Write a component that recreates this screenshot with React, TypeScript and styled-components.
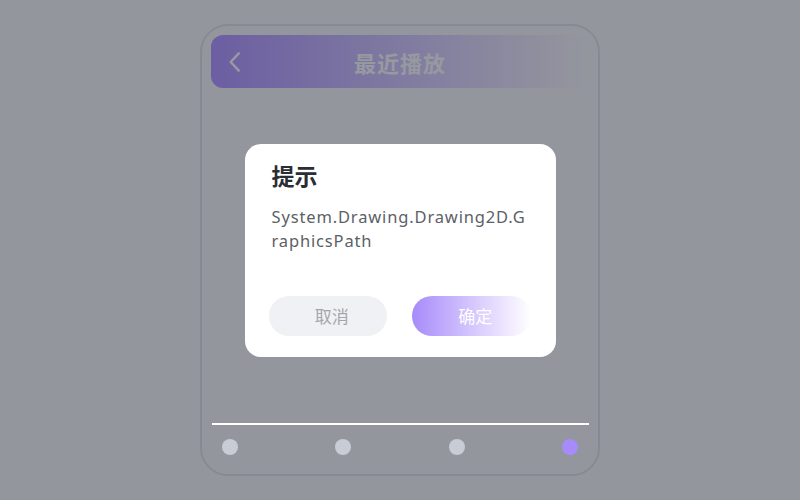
import React from "react";
import styled, { createGlobalStyle } from "styled-components";

const Global = createGlobalStyle`
  html, body { margin: 0; padding: 0; }
  body {
    width: 800px;
    height: 500px;
    overflow: hidden;
    background: #ebecef;
    font-family: "Noto Sans", "Noto Sans CJK SC", sans-serif;
  }
`;

const Page = styled.div`
  width: 800px;
  height: 500px;
  display: flex;
  align-items: center;
  justify-content: center;
`;

const Phone = styled.div`
  width: 396px;
  height: 448px;
  box-sizing: content-box;
  border: 2px solid #caccd1;
  border-radius: 28px;
  display: flex;
  flex-direction: column;
  overflow: hidden;
`;

const Header = styled.div`
  margin: 9px 9px 0 9px;
  height: 53px;
  border-radius: 12px;
  background: linear-gradient(90deg, #8760fb 0%, rgba(135, 96, 251, 0.45) 55%, rgba(235, 236, 239, 0) 100%);
  display: flex;
  align-items: center;
`;

const BackBtn = styled.div`
  width: 48px;
  height: 53px;
  display: flex;
  align-items: center;
  justify-content: center;
  color: #f4f4f8;
`;

const HeaderTitle = styled.div`
  flex: 1;
  text-align: center;
  margin-right: 48px;
  font-family: "Noto Sans CJK SC", sans-serif;
  font-weight: 700;
  font-size: 22px;
  color: #f2f2f6;
  letter-spacing: 1px;
`;

const Content = styled.div`
  flex: 1;
`;

const Backdrop = styled.div`
  position: fixed;
  inset: 0;
  background: rgba(90, 94, 104, 0.6);
  display: flex;
  align-items: center;
  justify-content: center;
  z-index: 10;
`;

const NavArea = styled.div`
  position: fixed;
  left: 212px;
  top: 423px;
  width: 377px;
  z-index: 11;
  display: flex;
  flex-direction: column;
`;

const NavLine = styled.div`
  height: 1.5px;
  background: #ffffff;
`;

const DotRow = styled.div`
  display: flex;
  justify-content: space-between;
  padding: 14px 11px 0 10px;
`;

const Dot = styled.div<{ $active?: boolean }>`
  width: 16px;
  height: 16px;
  border-radius: 50%;
  background: ${(p) => (p.$active ? "#a78bfa" : "#c8ccd4")};
`;

const Dialog = styled.div`
  width: 311px;
  height: 213px;
  box-sizing: border-box;
  background: #ffffff;
  border-radius: 16px;
  padding: 16px 25px 21px 24px;
  display: flex;
  flex-direction: column;
`;

const DialogTitle = styled.div`
  font-family: "Noto Sans CJK SC", sans-serif;
  font-weight: 700;
  font-size: 23px;
  line-height: 30px;
  color: #2a2d33;
  padding-left: 3px;
`;

const DialogBody = styled.div`
  margin-top: 15px;
  padding-left: 3px;
  font-size: 16.5px;
  line-height: 24px;
  letter-spacing: 0.85px;
  color: #5c5f66;
  word-break: break-all;
  flex: 1;
`;

const Actions = styled.div`
  display: flex;
  gap: 25px;
`;

const Btn = styled.button<{ $primary?: boolean }>`
  flex: 1;
  height: 40px;
  border: none;
  border-radius: 20px;
  font-family: "Noto Sans CJK SC", sans-serif;
  font-size: 17px;
  color: ${(p) => (p.$primary ? "#ffffff" : "#a3a6ad")};
  background: ${(p) =>
    p.$primary ? "linear-gradient(90deg, #a78bfa 0%, #d9ccfd 55%, #ffffff 100%)" : "#f0f1f4"};
  padding: 0 0 0 8px;
`;

export default function App() {
  return (
    <>
      <Global />
      <Page>
        <Phone>
          <Header>
            <BackBtn>
              <svg width="26" height="26" viewBox="0 0 24 24" fill="none" stroke="currentColor" strokeWidth="2.2" strokeLinecap="round" strokeLinejoin="round">
                <path d="M15.5 4 L8 12 L15.5 20" />
              </svg>
            </BackBtn>
            <HeaderTitle>最近播放</HeaderTitle>
          </Header>
          <Content />
        </Phone>
      </Page>
      <Backdrop>
        <Dialog>
          <DialogTitle>提示</DialogTitle>
          <DialogBody>System.Drawing.Drawing2D.GraphicsPath</DialogBody>
          <Actions>
            <Btn>取消</Btn>
            <Btn $primary>确定</Btn>
          </Actions>
        </Dialog>
      </Backdrop>
      <NavArea>
        <NavLine />
        <DotRow>
          <Dot />
          <Dot />
          <Dot />
          <Dot $active />
        </DotRow>
      </NavArea>
    </>
  );
}
